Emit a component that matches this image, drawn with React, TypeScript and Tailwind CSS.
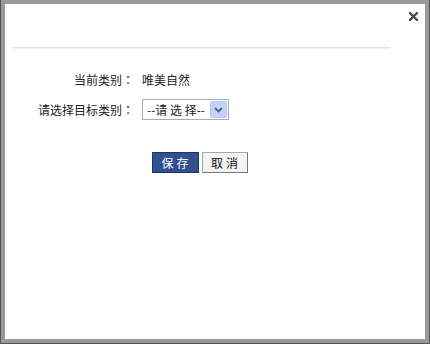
import React from "react";

const colon = (
  <span style={{ fontFamily: '"Noto Sans CJK TC", sans-serif' }}>：</span>
);

export default function App() {
  return (
    <div
      className="w-[430px] h-[344px] bg-[#999999] border-l border-r border-b border-[#555555] pt-[4px] pl-[4px] pr-[4px] pb-[4px]"
      style={{ fontFamily: '"Noto Sans CJK SC", "Noto Sans", sans-serif' }}
    >
      <div className="w-[420px] h-[335px] bg-white flex flex-col px-[7px] pt-[7px]">
        <div className="flex justify-end h-[9px] mt-[1px] pr-[0px]">
          <svg width="9" height="9" viewBox="0 0 9 9">
            <path d="M1 1 L8 8 M8 1 L1 8" stroke="#4a4a4a" strokeWidth="2.4" strokeLinecap="square" />
          </svg>
        </div>
        <div className="w-[378px] h-[2px] mt-[26px] bg-[#e2e2e2] border-b border-[#f2f2f2]" />
        <div className="w-[378px] flex flex-col mt-[24px] text-[12px] text-[#222] leading-[14px]">
          <div className="flex items-center h-[14px]">
            <div className="w-[122px] text-right">当前类别{colon}</div>
            <div className="ml-[8px]">唯美自然</div>
          </div>
          <div className="flex items-center mt-[12px] h-[21px]">
            <div className="w-[122px] text-right">请选择目标类别{colon}</div>
            <div className="ml-[8px] w-[87px] h-[21px] border border-[#a5acb2] bg-white flex items-center justify-between pl-[4px] pr-[1px]">
              <span className="whitespace-pre">--请 选 择--</span>
              <div className="w-[17px] h-[17px] bg-[#c3d3f7] border border-[#b5c8f2] rounded-[2px] flex items-center justify-center">
                <svg width="9" height="6" viewBox="0 0 9 6">
                  <path d="M1 1 L4.5 4.5 L8 1" stroke="#4d6185" strokeWidth="1.8" fill="none" />
                </svg>
              </div>
            </div>
          </div>
          <div className="flex justify-center gap-[3px] mt-[32px] pr-[3px]">
            <button className="w-[47px] h-[21px] bg-[#31508f] border border-[#1d3569] text-white text-[12px] leading-none tracking-[3px] pl-[3px]">
              保存
            </button>
            <button className="w-[46px] h-[21px] bg-[#f3f3f3] border border-[#a8a8a8] border-r-[#777] border-b-[#777] text-[#111] text-[12px] leading-none tracking-[3px] pl-[3px]">
              取消
            </button>
          </div>
        </div>
      </div>
    </div>
  );
}
